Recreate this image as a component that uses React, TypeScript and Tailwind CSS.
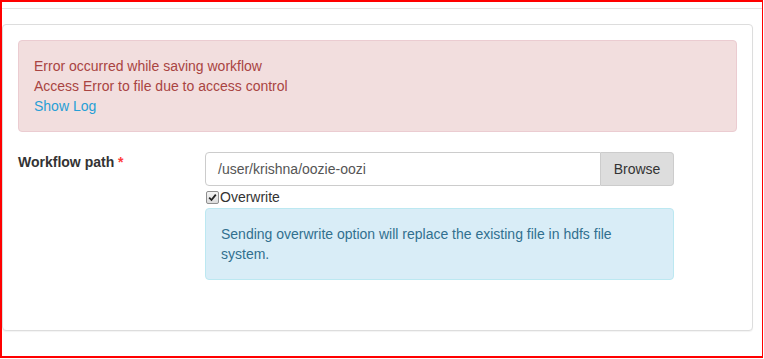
export default function App() {
  return (
    <div className="w-[763px] h-[358px] border-2 border-r border-[#ff0000] bg-white font-['Liberation_Sans',Arial,sans-serif] text-[14px] leading-5 text-[#333]">
      <div className="mt-[6px] border-t border-[#e3e3e3]" />
      <div className="mt-[15px] w-[751px] rounded border border-[#ddd] bg-white p-[15px] shadow-[0_1px_1px_rgba(0,0,0,0.05)]">
        <div className="mb-5 rounded border border-[#ebccd1] bg-[#f2dede] p-[15px] text-[#a94442]">
          <div>Error occurred while saving workflow</div>
          <div>Access Error to file due to access control</div>
          <a href="#" className="text-[#279fd6]">
            Show Log
          </a>
        </div>

        <div className="mb-[15px] flex">
          <label className="w-[187px] shrink-0 font-bold">
            Workflow path <span className="text-[#ff3b3b]">*</span>
          </label>
          <div className="w-[469px]">
            <div className="flex h-[34px]">
              <div className="flex flex-1 items-center rounded-l border border-[#ccc] px-3 text-[#555]">
                /user/krishna/oozie-oozi
              </div>
              <button className="w-[73px] rounded-r border border-l-0 border-[#ccc] bg-[#dddddd] text-[#333]">
                Browse
              </button>
            </div>
            <div className="mt-px flex h-5 items-center">
              <span className="ml-px mr-[1px] flex h-[13px] w-[13px] items-center justify-center rounded-[2px] border border-[#8f8f8f] bg-gradient-to-b from-[#f4f4f4] to-[#dcdcdc]">
                <svg width="9" height="9" viewBox="0 0 9 9">
                  <path d="M1.2 4.6 L3.5 7 L7.8 1.6" fill="none" stroke="#222" strokeWidth="1.8" />
                </svg>
              </span>
              <span>Overwrite</span>
            </div>
            <div className="mt-px mb-5 rounded border border-[#bce8f1] bg-[#d9edf7] p-[15px] text-[#31708f]">
              Sending overwrite option will replace the existing file in hdfs file system.
            </div>
          </div>
        </div>
      </div>
    </div>
  );
}
